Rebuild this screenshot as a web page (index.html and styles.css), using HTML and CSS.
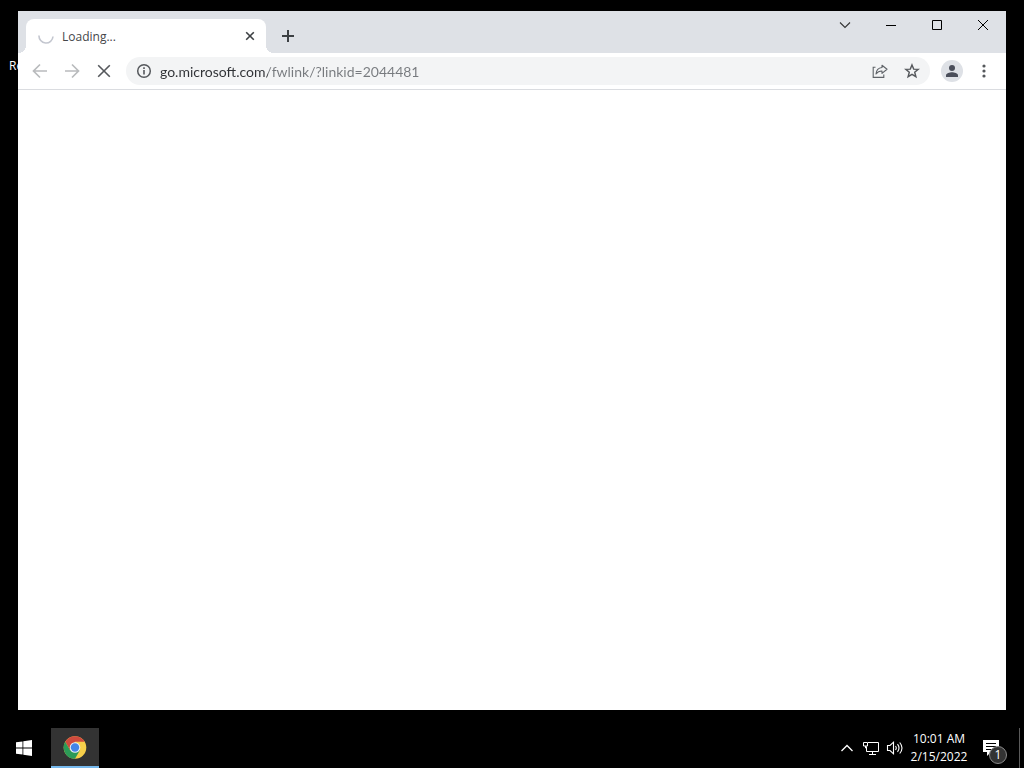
FILE: index.html
```html
<!DOCTYPE html>
<html lang="en">
<head>
    <meta charset="utf-8"/>
    <meta content="width=device-width, initial-scale=1.0" name="viewport"/>
    <title>Desktop</title>
    <link rel="stylesheet" href="styles.css">
</head>
<body>
    <main class="desktop">
        <span class="desktop-label">Re</span>
        <section class="window">
            <div class="tab-strip">
                <div class="tab">
                    <svg class="spinner" width="16" height="16" viewBox="0 0 16 16">
                        <path d="M1 7.500A7 7 0 0 0 15 8.500" fill="none" stroke="#c3c6cf" stroke-width="1.600"/>
                    </svg>
                    <span class="tab-title">Loading...</span>
                    <button class="tab-close" aria-label="Close tab">
                        <svg width="16" height="16" viewBox="0 0 16 16">
                            <path d="M4.200 4.200l7.600 7.600M11.800 4.200l-7.600 7.600" stroke="#3c4043" stroke-width="1.600"/>
                        </svg>
                    </button>
                </div>
                <button class="new-tab" aria-label="New tab">
                    <svg width="16" height="16" viewBox="0 0 16 16">
                        <path d="M8 2v12M2 8h12" stroke="#3c4043" stroke-width="2"/>
                    </svg>
                </button>
                <div class="window-controls">
                    <button aria-label="Search tabs">
                        <svg width="12" height="12" viewBox="0 0 12 12">
                            <path d="M1 3.500l5 5 5-5" fill="none" stroke="#333" stroke-width="1.100"/>
                        </svg>
                    </button>
                    <button aria-label="Minimize">
                        <svg width="12" height="12" viewBox="0 0 12 12">
                            <path d="M1 6.500h10" stroke="#000"/>
                        </svg>
                    </button>
                    <button aria-label="Maximize">
                        <svg width="12" height="12" viewBox="0 0 12 12">
                            <path d="M1.500 1.500h9v9h-9z" fill="none" stroke="#000"/>
                        </svg>
                    </button>
                    <button aria-label="Close">
                        <svg width="12" height="12" viewBox="0 0 12 12">
                            <path d="M1 1l10 10M11 1L1 11" stroke="#000"/>
                        </svg>
                    </button>
                </div>
            </div>

            <div class="toolbar">
                <button class="tool" aria-label="Back">
                    <svg width="16" height="16" viewBox="0 0 16 16">
                        <path d="M15 8H2M8 1.500L1.500 8 8 14.500" fill="none" stroke="#b9bbbd" stroke-width="1.700"/>
                    </svg>
                </button>
                <button class="tool" aria-label="Forward">
                    <svg width="16" height="16" viewBox="0 0 16 16">
                        <path d="M1 8h13M8 1.500L14.500 8 8 14.500" fill="none" stroke="#b9bbbd" stroke-width="1.700"/>
                    </svg>
                </button>
                <button class="tool" aria-label="Stop">
                    <svg width="16" height="16" viewBox="0 0 16 16">
                        <path d="M2.200 2.200l11.600 11.600M13.800 2.200L2.200 13.800" stroke="#55585c" stroke-width="1.600"/>
                    </svg>
                </button>
                <div class="omnibox">
                    <button class="omni-button" aria-label="Site information">
                        <svg width="16" height="16" viewBox="0 0 16 16">
                            <circle cx="8" cy="8" r="6.300" fill="none" stroke="#55585c" stroke-width="1.500"/>
                            <path d="M8 7v4.600M8 4.300v1.600" stroke="#55585c" stroke-width="1.600"/>
                        </svg>
                    </button>
                    <input class="address" type="text" aria-label="Address" spellcheck="false" value="go.microsoft.com/fwlink/?linkid=2044481">
                    <button class="omni-button" aria-label="Share">
                        <svg width="16" height="16" viewBox="0 0 16 16" fill="none" stroke="#5f6368" stroke-width="1.100">
                            <path d="M3.500 4.200H1.200v10.200h10.600v-2.800"/>
                            <path d="M10 2.200L15 6.300 10 10.400V8C7.500 7.900 5.600 8.900 4 11c.3-3.700 2.600-6.100 6-6.500z" stroke-linejoin="round"/>
                        </svg>
                    </button>
                    <button class="omni-button" aria-label="Bookmark this tab">
                        <svg width="16" height="16" viewBox="0 0 16 16">
                            <path d="M8 1.900l1.700 4.200 4.500.3-3.500 2.900 1.200 4.400L8 11.300l-3.900 2.400 1.200-4.400-3.500-2.900 4.500-.3z" fill="none" stroke="#55585c" stroke-width="1.400"/>
                        </svg>
                    </button>
                </div>
                <button class="profile" aria-label="Profile">
                    <svg width="14" height="14" viewBox="0 0 14 14" fill="#4a4e5a">
                        <circle cx="7" cy="4" r="3"/>
                        <path d="M1 13v-1.600C1 9.300 4.800 8.300 7 8.300s6 1 6 3.100V13z"/>
                    </svg>
                </button>
                <button class="tool" aria-label="Menu">
                    <svg width="16" height="16" viewBox="0 0 16 16" fill="#55585c">
                        <circle cx="8" cy="3" r="1.600"/>
                        <circle cx="8" cy="8" r="1.600"/>
                        <circle cx="8" cy="13" r="1.600"/>
                    </svg>
                </button>
            </div>

            <div class="page"></div>
        </section>
    </main>

    <footer class="taskbar">
        <button class="start" aria-label="Start">
            <svg width="16" height="16" viewBox="0 0 16 16" fill="#fff">
                <path d="M0 2.300L6.500 1.400v6.100H0zM7.300 1.300L16 0v7.500H7.300zM0 8.400h6.500v6.200L0 13.700zM7.300 8.400H16V16l-8.700-1.300z"/>
            </svg>
        </button>
        <button class="task" aria-label="Google Chrome">
            <svg width="24" height="24" viewBox="0 0 24 24">
                <circle cx="12" cy="12.500" r="11.300" fill="#f7cf4a"/>
                <path d="M2.200 6.850A11.300 11.300 0 0 1 21.800 6.850H12L7.100 15.300z" fill="#cf4a3e"/>
                <path d="M2.200 6.850A11.300 11.300 0 0 0 12 23.800l4.900-8.500L12 12.500 7.100 15.300z" fill="#2c9a57"/>
                <circle cx="12" cy="12.500" r="5.300" fill="#e9eef4"/>
                <circle cx="12" cy="12.500" r="4.200" fill="#4285e8"/>
            </svg>
        </button>
        <div class="tray">
            <button class="tray-button" aria-label="Show hidden icons">
                <svg width="16" height="16" viewBox="0 0 16 16">
                    <path d="M2.500 11L8 5.500l5.500 5.500" fill="none" stroke="#fff" stroke-width="1.300"/>
                </svg>
            </button>
            <button class="tray-button" aria-label="Network">
                <svg width="16" height="16" viewBox="0 0 16 16" fill="none" stroke="#fff">
                    <path d="M5 2.500h10.500v9h-12V6.500M9.500 11.500v3M6 14.500h7M.5 2.500h4v3.500h-4zM2.500 6v2h1"/>
                </svg>
            </button>
            <button class="tray-button" aria-label="Volume">
                <svg width="18" height="16" viewBox="0 0 18 16" fill="none" stroke="#fff" stroke-width="1.100">
                    <path d="M1.500 5.500H4l3.500-3.300v11.600L4 10.500H1.500z"/>
                    <path d="M9.500 6q1.500 2 0 4M11.500 4.200q3 3.800 0 7.600M13.700 2.500q4.600 5.500 0 11"/>
                </svg>
            </button>
            <button class="clock"><span>10:01 AM</span><span>2/15/2022</span></button>
            <button class="notifications" aria-label="Notifications">
                <svg width="16" height="16" viewBox="0 0 16 16">
                    <path d="M0 0h16v12H8l-4 4v-4H0z" fill="#fff"/>
                    <path d="M3 3.500h10M3 6.500h10M3 9.500h7" stroke="#000"/>
                </svg>
                <span class="badge">1</span>
            </button>
            <button class="show-desktop" aria-label="Show desktop"></button>
        </div>
    </footer>
</body>
</html>
```
FILE: styles.css
```css
* {
    box-sizing: border-box;
}

body {
    margin: 0;
    height: 100vh;
    display: flex;
    flex-direction: column;
    overflow: hidden;
    background-color: #000;
    font-family: "Open Sans", "Noto Sans", sans-serif;
    font-size: 12px;
}

button {
    display: flex;
    align-items: center;
    justify-content: center;
    flex-shrink: 0;
    padding: 0;
    border: none;
    background: none;
    color: inherit;
    font: inherit;
}

svg {
    display: block;
    flex-shrink: 0;
}

.desktop {
    position: relative;
    flex: 1;
    display: flex;
    min-height: 0;
    padding: 11px 18px 18px;
}

.desktop-label {
    position: absolute;
    top: 58px;
    left: 9px;
    line-height: 16px;
    color: #fff;
}

/* browser window */
.window {
    position: relative;
    flex: 1;
    display: flex;
    flex-direction: column;
    min-width: 0;
    background-color: #fff;
}

.tab-strip {
    display: flex;
    height: 42px;
    padding-left: 8px;
    background-color: #dee1e6;
}

.tab {
    position: relative;
    display: flex;
    align-items: center;
    width: 240px;
    height: 34px;
    margin-top: 8px;
    padding: 0 8px 0 12px;
    border-radius: 8px 8px 0 0;
    background-color: #fff;
}

/* curved feet of the tab */
.tab::before,
.tab::after {
    content: "";
    position: absolute;
    bottom: 0;
    width: 8px;
    height: 8px;
}

.tab::before {
    left: -8px;
    background: radial-gradient(circle at 0 0, #dee1e6 8px, #fff 8px);
}

.tab::after {
    right: -8px;
    background: radial-gradient(circle at 100% 0, #dee1e6 8px, #fff 8px);
}

.tab-title {
    flex: 1;
    margin-left: 8px;
    color: #45474a;
}

.new-tab {
    width: 28px;
    height: 28px;
    margin: 11px 0 0 8px;
}

.window-controls {
    display: flex;
    height: 28px;
    margin-left: auto;
}

.window-controls button {
    width: 46px;
}

.toolbar {
    display: flex;
    align-items: center;
    height: 37px;
    padding: 0 6px;
    border-bottom: 1px solid #dadce0;
}

.tool {
    width: 32px;
    height: 28px;
}

.omnibox {
    flex: 1;
    display: flex;
    align-items: center;
    height: 28px;
    min-width: 0;
    margin: 0 11px 0 6px;
    padding: 0 2px;
    border-radius: 14px;
    background-color: #f3f4f5;
}

.omni-button {
    width: 32px;
    height: 28px;
}

.address {
    flex: 1;
    min-width: 0;
    height: 28px;
    padding: 0;
    border: none;
    outline: none;
    /* host is dark, the rest of the address is grey */
    background: linear-gradient(to right, #303236 108px, #777a7e 108px);
    -webkit-background-clip: text;
    background-clip: text;
    -webkit-text-fill-color: transparent;
    font-family: Lato, sans-serif;
    font-size: 14px;
}

.profile {
    width: 22px;
    height: 22px;
    margin-right: 5px;
    border-radius: 50%;
    background-color: #dee1e6;
}

.page {
    flex: 1;
}

/* taskbar */
.taskbar {
    display: flex;
    height: 40px;
    color: #fff;
}

.start {
    width: 48px;
}

.task {
    width: 48px;
    margin-left: 3px;
    border-bottom: 2px solid #76b9ed;
    background-color: #333;
}

.tray {
    display: flex;
    margin-left: auto;
}

.tray-button {
    width: 24px;
}

.clock {
    flex-direction: column;
    width: 64px;
    line-height: 18px;
}

.notifications {
    position: relative;
    width: 40px;
}

.badge {
    position: absolute;
    right: 4px;
    bottom: 4px;
    width: 18px;
    height: 18px;
    border: 1px solid #8a8a8a;
    border-radius: 50%;
    background-color: #333;
    line-height: 16px;
    text-align: center;
}

.show-desktop {
    width: 5px;
    margin-left: 8px;
    border-left: 1px solid #5a5a5a;
}
```
